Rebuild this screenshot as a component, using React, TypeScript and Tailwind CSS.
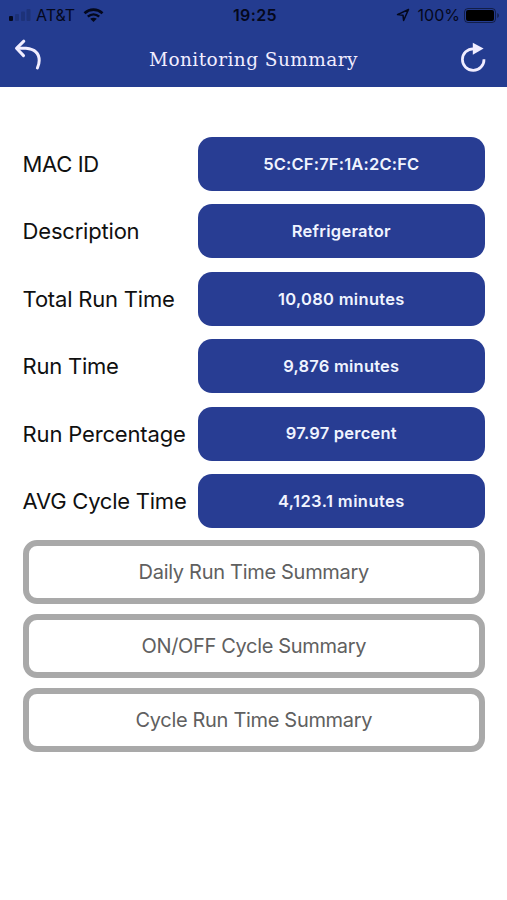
interface Reading {
    label: string;
    labelClass: string;
    value: string;
    valueClass: string;
}

const readings: Reading[] = [
    { label: 'MAC ID', labelClass: 'tracking-[-0.35px]', value: '5C:CF:7F:1A:2C:FC', valueClass: 'tracking-[0.18px]' },
    { label: 'Description', labelClass: 'tracking-[-0.2px]', value: 'Refrigerator', valueClass: 'tracking-[0.25px]' },
    { label: 'Total Run Time', labelClass: 'tracking-[-0.2px]', value: '10,080 minutes', valueClass: 'tracking-[0.3px]' },
    { label: 'Run Time', labelClass: 'tracking-[-0.25px]', value: '9,876 minutes', valueClass: 'tracking-[0.22px]' },
    { label: 'Run Percentage', labelClass: 'tracking-[-0.17px]', value: '97.97 percent', valueClass: 'tracking-[0.22px]' },
    { label: 'AVG Cycle Time', labelClass: 'tracking-[-0.24px]', value: '4,123.1 minutes', valueClass: 'tracking-[0.42px]' },
];

const summaries = [
    { title: 'Daily Run Time Summary', className: 'tracking-[-0.3px]' },
    { title: 'ON/OFF Cycle Summary', className: 'tracking-[-0.33px]' },
    { title: 'Cycle Run Time Summary', className: 'tracking-[-0.32px]' },
];

const StatusBar = () => (
    <div className="grid h-[30px] grid-cols-3 items-center pr-[7px] pl-2 text-[#04081c]">
        <div className="flex items-center">
            <svg width="24" height="14" viewBox="0 0 24 14" fill="currentColor">
                <rect x="1" y="8" width="4" height="5" rx="1" />
                <rect x="7" y="6" width="4" height="7" rx="1" opacity="0.2" />
                <rect x="13" y="3.5" width="4" height="9.5" rx="1" opacity="0.2" />
                <rect x="18.5" y="1" width="4" height="12" rx="1" opacity="0.2" />
            </svg>
            <span className="ml-1 text-[16px] leading-none">AT&amp;T</span>
            <svg className="ml-2" width="21" height="15" viewBox="0 0 21 15" fill="none" stroke="currentColor">
                <path d="M1.5 5.2C6.8 0.4 14.2 0.4 19.5 5.2" strokeWidth="2.7" />
                <path d="M4.8 8.7C8.2 5.6 12.8 5.6 16.2 8.7" strokeWidth="2.5" />
                <path d="M10.5 14L7.2 10.8C9.2 9.3 11.8 9.3 13.8 10.8Z" fill="currentColor" stroke="none" />
            </svg>
        </div>
        <span className="pl-[2px] text-center text-[16px] leading-none font-semibold tracking-[0.4px]">19:25</span>
        <div className="flex items-center justify-end">
            <svg width="14" height="14" viewBox="0 0 14 14" fill="none" stroke="currentColor" strokeWidth="1.5" strokeLinejoin="round">
                <path d="M12.5 1.5L1.5 6.6L7 7.2L7.6 12.5Z" />
            </svg>
            <span className="ml-2 text-[16px] leading-none">100%</span>
            <svg className="ml-1 text-black" width="36" height="15" viewBox="0 0 36 15">
                <rect x="0.5" y="0.5" width="31" height="14" rx="3.5" fill="none" stroke="currentColor" opacity="0.5" />
                <rect x="2" y="2" width="28" height="11" rx="2" fill="currentColor" />
                <path d="M33.3 5C35.4 5.8 35.4 9.2 33.3 10Z" fill="currentColor" opacity="0.5" />
            </svg>
        </div>
    </div>
);

const NavBar = () => (
    <div className="flex h-[57px] items-center justify-between pr-[19px] pl-[14px] text-[#f1edff]">
        <svg className="-mt-[9px]" width="28" height="32" viewBox="0 0 28 32" fill="none" stroke="currentColor" strokeWidth="3" strokeLinecap="round" strokeLinejoin="round">
            <path d="M9.8 3.2L2.5 10.3L9.5 17.6" />
            <path d="M3.5 10.3H12C21 11.2 25.2 16 25.2 22.5C25.2 25 24.5 27.5 23.4 30" />
        </svg>
        <h1 className="mt-[3px] pl-[5px] font-['DejaVu_Serif',serif] text-[18.5px] leading-none tracking-[0.45px]">Monitoring Summary</h1>
        <svg className="-mt-[3px]" width="28" height="31" viewBox="0 0 28 31" fill="none">
            <path d="M13.5 6.8A10.8 10.8 0 1 0 24 17.2" stroke="currentColor" strokeWidth="2.7" />
            <path d="M12.8 0.8L23.6 6.4L12.8 12.7Z" fill="currentColor" />
        </svg>
    </div>
);

export default function App() {
    return (
        <div className="min-h-[900px] w-[507px] bg-white font-['Inter','Liberation_Sans',sans-serif]">
            <header className="h-[87px] bg-[#243c90]">
                <StatusBar />
                <NavBar />
            </header>

            <main className="pt-[50px] pr-[22px] pl-[22.6px]">
                <div className="flex flex-col gap-[13.4px]">
                    {readings.map((item) => (
                        <div key={item.label} className="flex h-[54px] items-center">
                            <div className="w-[175px] text-[22px] leading-none whitespace-nowrap text-[#101010]">
                                <span className={item.labelClass}>{item.label}</span>
                            </div>
                            <div className="flex h-full flex-1 items-center justify-center rounded-[14px] bg-[#283d93] text-[16.5px] leading-none font-semibold text-[#f0f4ff]">
                                <span className={item.valueClass}>{item.value}</span>
                            </div>
                        </div>
                    ))}
                </div>

                <div className="mt-[11.6px] flex flex-col gap-[9.6px]">
                    {summaries.map((item) => (
                        <button
                            key={item.title}
                            className="flex h-[64.4px] items-center justify-center rounded-[14px] border-[6.5px] border-[#a9a9a9] text-[20px] leading-none text-[#606060]"
                        >
                            <span className={item.className}>{item.title}</span>
                        </button>
                    ))}
                </div>
            </main>
        </div>
    );
}
